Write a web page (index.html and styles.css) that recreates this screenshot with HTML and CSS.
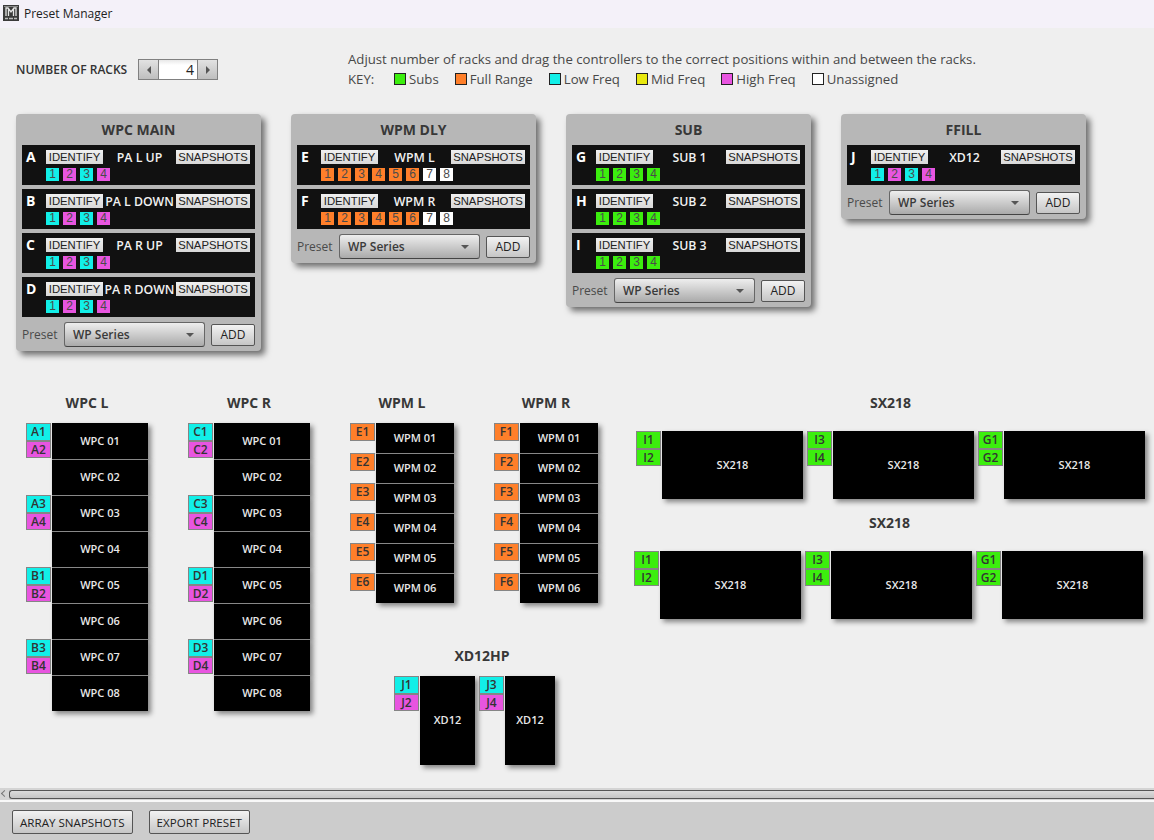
FILE: index.html
```html
<!DOCTYPE html>
<html>
  <head>
    <title>Preset Manager</title>
    <link rel="stylesheet" href="styles.css">
  </head>

  <body>
    <div class="titlebar">
      <svg class="app-icon" width="16" height="16" viewBox="0 0 16 16">
        <rect width="16" height="16" fill="#3a3a3a"/>
        <rect x="1" y="1" width="14" height="1" fill="#8a8a8a"/>
        <path d="M3 11V3h2l3 4 3-4h2v8M5.500 4v7M10.500 4v7" fill="none" stroke="#e4e4e4" stroke-width="1.300"/>
        <path d="M2 13.500h3M6 13.500h4M11 13.500h3" fill="none" stroke="#bbb" stroke-width="1.500"/>
      </svg>
      <span>Preset Manager</span>
    </div>

    <div class="main">
      <div class="top">
        <div class="racks-count">
          <span class="racks-label">NUMBER OF RACKS</span>
          <div class="spinner">
            <button class="spin-btn"><span class="tri-left"></span></button>
            <div class="spin-value">4</div>
            <button class="spin-btn"><span class="tri-right"></span></button>
          </div>
        </div>
        <div class="help">
          <div>Adjust number of racks and drag the controllers to the correct positions within and between the racks.</div>
          <div class="key">
            <span class="key-title">KEY:</span>
            <span class="key-item"><i class="swatch subs"></i>Subs</span>
            <span class="key-item"><i class="swatch full"></i>Full Range</span>
            <span class="key-item"><i class="swatch low"></i>Low Freq</span>
            <span class="key-item"><i class="swatch mid"></i>Mid Freq</span>
            <span class="key-item"><i class="swatch high"></i>High Freq</span>
            <span class="key-item"><i class="swatch none"></i>Unassigned</span>
          </div>
        </div>
      </div>

      <div class="racks">
        <div class="rack">
          <div class="rack-title">WPC MAIN</div>
          <div class="ctrl">
            <div class="ctrl-letter">A</div>
            <div class="ctrl-body">
              <div class="ctrl-top"><button class="mini identify">IDENTIFY</button><span class="ctrl-name">PA L UP</span><button class="mini snapshots">SNAPSHOTS</button></div>
              <div class="chips"><span class="chip low">1</span><span class="chip high">2</span><span class="chip low">3</span><span class="chip high">4</span></div>
            </div>
          </div>
          <div class="ctrl">
            <div class="ctrl-letter">B</div>
            <div class="ctrl-body">
              <div class="ctrl-top"><button class="mini identify">IDENTIFY</button><span class="ctrl-name">PA L DOWN</span><button class="mini snapshots">SNAPSHOTS</button></div>
              <div class="chips"><span class="chip low">1</span><span class="chip high">2</span><span class="chip low">3</span><span class="chip high">4</span></div>
            </div>
          </div>
          <div class="ctrl">
            <div class="ctrl-letter">C</div>
            <div class="ctrl-body">
              <div class="ctrl-top"><button class="mini identify">IDENTIFY</button><span class="ctrl-name">PA R UP</span><button class="mini snapshots">SNAPSHOTS</button></div>
              <div class="chips"><span class="chip low">1</span><span class="chip high">2</span><span class="chip low">3</span><span class="chip high">4</span></div>
            </div>
          </div>
          <div class="ctrl">
            <div class="ctrl-letter">D</div>
            <div class="ctrl-body">
              <div class="ctrl-top"><button class="mini identify">IDENTIFY</button><span class="ctrl-name">PA R DOWN</span><button class="mini snapshots">SNAPSHOTS</button></div>
              <div class="chips"><span class="chip low">1</span><span class="chip high">2</span><span class="chip low">3</span><span class="chip high">4</span></div>
            </div>
          </div>
          <div class="preset-row">
            <span class="preset-label">Preset</span>
            <div class="combo">WP Series<span class="combo-arrow"></span></div>
            <button class="btn add">ADD</button>
          </div>
        </div>

        <div class="rack">
          <div class="rack-title">WPM DLY</div>
          <div class="ctrl">
            <div class="ctrl-letter">E</div>
            <div class="ctrl-body">
              <div class="ctrl-top"><button class="mini identify">IDENTIFY</button><span class="ctrl-name">WPM L</span><button class="mini snapshots">SNAPSHOTS</button></div>
              <div class="chips"><span class="chip full">1</span><span class="chip full">2</span><span class="chip full">3</span><span class="chip full">4</span><span class="chip full">5</span><span class="chip full">6</span><span class="chip none">7</span><span class="chip none">8</span></div>
            </div>
          </div>
          <div class="ctrl">
            <div class="ctrl-letter">F</div>
            <div class="ctrl-body">
              <div class="ctrl-top"><button class="mini identify">IDENTIFY</button><span class="ctrl-name">WPM R</span><button class="mini snapshots">SNAPSHOTS</button></div>
              <div class="chips"><span class="chip full">1</span><span class="chip full">2</span><span class="chip full">3</span><span class="chip full">4</span><span class="chip full">5</span><span class="chip full">6</span><span class="chip none">7</span><span class="chip none">8</span></div>
            </div>
          </div>
          <div class="preset-row">
            <span class="preset-label">Preset</span>
            <div class="combo">WP Series<span class="combo-arrow"></span></div>
            <button class="btn add">ADD</button>
          </div>
        </div>

        <div class="rack">
          <div class="rack-title">SUB</div>
          <div class="ctrl">
            <div class="ctrl-letter">G</div>
            <div class="ctrl-body">
              <div class="ctrl-top"><button class="mini identify">IDENTIFY</button><span class="ctrl-name">SUB 1</span><button class="mini snapshots">SNAPSHOTS</button></div>
              <div class="chips"><span class="chip subs">1</span><span class="chip subs">2</span><span class="chip subs">3</span><span class="chip subs">4</span></div>
            </div>
          </div>
          <div class="ctrl">
            <div class="ctrl-letter">H</div>
            <div class="ctrl-body">
              <div class="ctrl-top"><button class="mini identify">IDENTIFY</button><span class="ctrl-name">SUB 2</span><button class="mini snapshots">SNAPSHOTS</button></div>
              <div class="chips"><span class="chip subs">1</span><span class="chip subs">2</span><span class="chip subs">3</span><span class="chip subs">4</span></div>
            </div>
          </div>
          <div class="ctrl">
            <div class="ctrl-letter">I</div>
            <div class="ctrl-body">
              <div class="ctrl-top"><button class="mini identify">IDENTIFY</button><span class="ctrl-name">SUB 3</span><button class="mini snapshots">SNAPSHOTS</button></div>
              <div class="chips"><span class="chip subs">1</span><span class="chip subs">2</span><span class="chip subs">3</span><span class="chip subs">4</span></div>
            </div>
          </div>
          <div class="preset-row">
            <span class="preset-label">Preset</span>
            <div class="combo">WP Series<span class="combo-arrow"></span></div>
            <button class="btn add">ADD</button>
          </div>
        </div>

        <div class="rack">
          <div class="rack-title">FFILL</div>
          <div class="ctrl">
            <div class="ctrl-letter">J</div>
            <div class="ctrl-body">
              <div class="ctrl-top"><button class="mini identify">IDENTIFY</button><span class="ctrl-name">XD12</span><button class="mini snapshots">SNAPSHOTS</button></div>
              <div class="chips"><span class="chip low">1</span><span class="chip high">2</span><span class="chip low">3</span><span class="chip high">4</span></div>
            </div>
          </div>
          <div class="preset-row">
            <span class="preset-label">Preset</span>
            <div class="combo">WP Series<span class="combo-arrow"></span></div>
            <button class="btn add">ADD</button>
          </div>
        </div>
      </div>

      <div class="arrays">
        <div class="array">
          <div class="array-title">WPC L</div>
          <div class="cab-row wpc"><div class="tags"><span class="tag low">A1</span><span class="tag high">A2</span></div><div class="cab">WPC 01</div></div>
          <div class="cab-row wpc"><div class="tags"></div><div class="cab">WPC 02</div></div>
          <div class="cab-row wpc"><div class="tags"><span class="tag low">A3</span><span class="tag high">A4</span></div><div class="cab">WPC 03</div></div>
          <div class="cab-row wpc"><div class="tags"></div><div class="cab">WPC 04</div></div>
          <div class="cab-row wpc"><div class="tags"><span class="tag low">B1</span><span class="tag high">B2</span></div><div class="cab">WPC 05</div></div>
          <div class="cab-row wpc"><div class="tags"></div><div class="cab">WPC 06</div></div>
          <div class="cab-row wpc"><div class="tags"><span class="tag low">B3</span><span class="tag high">B4</span></div><div class="cab">WPC 07</div></div>
          <div class="cab-row wpc"><div class="tags"></div><div class="cab">WPC 08</div></div>
        </div>

        <div class="array">
          <div class="array-title">WPC R</div>
          <div class="cab-row wpc"><div class="tags"><span class="tag low">C1</span><span class="tag high">C2</span></div><div class="cab">WPC 01</div></div>
          <div class="cab-row wpc"><div class="tags"></div><div class="cab">WPC 02</div></div>
          <div class="cab-row wpc"><div class="tags"><span class="tag low">C3</span><span class="tag high">C4</span></div><div class="cab">WPC 03</div></div>
          <div class="cab-row wpc"><div class="tags"></div><div class="cab">WPC 04</div></div>
          <div class="cab-row wpc"><div class="tags"><span class="tag low">D1</span><span class="tag high">D2</span></div><div class="cab">WPC 05</div></div>
          <div class="cab-row wpc"><div class="tags"></div><div class="cab">WPC 06</div></div>
          <div class="cab-row wpc"><div class="tags"><span class="tag low">D3</span><span class="tag high">D4</span></div><div class="cab">WPC 07</div></div>
          <div class="cab-row wpc"><div class="tags"></div><div class="cab">WPC 08</div></div>
        </div>

        <div class="array-col">
          <div class="array-pair">
            <div class="array">
              <div class="array-title">WPM L</div>
              <div class="cab-row wpm"><div class="tags"><span class="tag full">E1</span></div><div class="cab">WPM 01</div></div>
              <div class="cab-row wpm"><div class="tags"><span class="tag full">E2</span></div><div class="cab">WPM 02</div></div>
              <div class="cab-row wpm"><div class="tags"><span class="tag full">E3</span></div><div class="cab">WPM 03</div></div>
              <div class="cab-row wpm"><div class="tags"><span class="tag full">E4</span></div><div class="cab">WPM 04</div></div>
              <div class="cab-row wpm"><div class="tags"><span class="tag full">E5</span></div><div class="cab">WPM 05</div></div>
              <div class="cab-row wpm"><div class="tags"><span class="tag full">E6</span></div><div class="cab">WPM 06</div></div>
            </div>
            <div class="array">
              <div class="array-title">WPM R</div>
              <div class="cab-row wpm"><div class="tags"><span class="tag full">F1</span></div><div class="cab">WPM 01</div></div>
              <div class="cab-row wpm"><div class="tags"><span class="tag full">F2</span></div><div class="cab">WPM 02</div></div>
              <div class="cab-row wpm"><div class="tags"><span class="tag full">F3</span></div><div class="cab">WPM 03</div></div>
              <div class="cab-row wpm"><div class="tags"><span class="tag full">F4</span></div><div class="cab">WPM 04</div></div>
              <div class="cab-row wpm"><div class="tags"><span class="tag full">F5</span></div><div class="cab">WPM 05</div></div>
              <div class="cab-row wpm"><div class="tags"><span class="tag full">F6</span></div><div class="cab">WPM 06</div></div>
            </div>
          </div>
          <div class="xd-group">
            <div class="array-title xd-title">XD12HP</div>
            <div class="xd-row">
              <div class="cab-row xd"><div class="tags"><span class="tag low">J1</span><span class="tag high">J2</span></div><div class="cab">XD12</div></div>
              <div class="cab-row xd narrow"><div class="tags"><span class="tag low">J3</span><span class="tag high">J4</span></div><div class="cab">XD12</div></div>
            </div>
          </div>
        </div>

        <div class="sx-col">
          <div class="sx-group first">
            <div class="array-title">SX218</div>
            <div class="sx-row">
              <div class="cab-row sx"><div class="tags"><span class="tag subs">I1</span><span class="tag subs">I2</span></div><div class="cab">SX218</div></div>
              <div class="cab-row sx"><div class="tags"><span class="tag subs">I3</span><span class="tag subs">I4</span></div><div class="cab">SX218</div></div>
              <div class="cab-row sx"><div class="tags"><span class="tag subs">G1</span><span class="tag subs">G2</span></div><div class="cab">SX218</div></div>
            </div>
          </div>
          <div class="sx-group">
            <div class="array-title">SX218</div>
            <div class="sx-row">
              <div class="cab-row sx"><div class="tags"><span class="tag subs">I1</span><span class="tag subs">I2</span></div><div class="cab">SX218</div></div>
              <div class="cab-row sx"><div class="tags"><span class="tag subs">I3</span><span class="tag subs">I4</span></div><div class="cab">SX218</div></div>
              <div class="cab-row sx"><div class="tags"><span class="tag subs">G1</span><span class="tag subs">G2</span></div><div class="cab">SX218</div></div>
            </div>
          </div>
        </div>
      </div>
    </div>

    <div class="scrollbar">
      <span class="scroll-arrow"></span>
      <div class="scroll-thumb"></div>
    </div>

    <div class="footer">
      <button class="btn foot">ARRAY SNAPSHOTS</button>
      <button class="btn foot">EXPORT PRESET</button>
    </div>
  </body>
</html>
```

FILE: styles.css
```css
* {
  box-sizing: border-box;
}

html,
body {
  margin: 0;
  height: 840px;
  overflow: hidden;
}

body {
  display: flex;
  flex-direction: column;
  background-color: #efefef;
  font-family: "Open Sans", "Liberation Sans", sans-serif;
  color: #3c3c3c;
}

button {
  margin: 0;
  padding: 0;
  font-family: "Liberation Sans", sans-serif;
}

/* window title */
.titlebar {
  display: flex;
  align-items: center;
  flex: none;
  height: 28px;
  padding: 0 0 2px 3px;
  background-color: #f4f1f9;
  font-size: 12px;
  color: #222;
}

.app-icon {
  margin-right: 5px;
}

.main {
  flex: 1;
  min-height: 0;
}

/* number of racks and key */
.top {
  display: flex;
  height: 86px;
  padding-left: 16px;
}

.racks-count {
  display: flex;
  align-items: center;
  width: 332px;
  height: 21px;
  margin-top: 31px;
}

.racks-label {
  width: 122px;
  font-size: 12px;
  font-weight: 600;
  color: #333;
  white-space: nowrap;
}

.spinner {
  display: flex;
  width: 80px;
  height: 21px;
  border: 1px solid #808080;
  background-color: #fff;
}

.spin-btn {
  display: flex;
  align-items: center;
  justify-content: center;
  width: 19px;
  border: none;
  background: linear-gradient(#e2e2e2, #bebebe);
}

.spin-value {
  flex: 1;
  padding-right: 3px;
  border-left: 1px solid #808080;
  border-right: 1px solid #808080;
  background: linear-gradient(#e8e8e8, #fff 5px);
  text-align: right;
  font-size: 14px;
  line-height: 19px;
  color: #222;
}

.tri-left,
.tri-right {
  width: 0;
  height: 0;
  border-top: 4px solid transparent;
  border-bottom: 4px solid transparent;
}

.tri-left {
  border-right: 4px solid #555;
}

.tri-right {
  border-left: 4px solid #555;
}

.help {
  margin-top: 21px;
  font-size: 13.2px;
  line-height: 20px;
  color: #484848;
  white-space: nowrap;
}

.key {
  display: flex;
}

.key-title {
  width: 46px;
}

.key-item {
  display: flex;
  align-items: center;
  margin-right: 16px;
}

.swatch {
  width: 12px;
  height: 12px;
  margin-right: 3px;
  border: 1px solid #222;
}

.subs {
  background-color: #3cee0e;
}

.full {
  background-color: #ff7f2a;
}

.low {
  background-color: #12efe8;
}

.mid {
  background-color: #e8e80e;
}

.high {
  background-color: #e855e0;
}

.none {
  background-color: #fff;
}

/* rack panels */
.racks {
  display: flex;
  align-items: flex-start;
  gap: 30px;
  height: 279px;
  padding-left: 16px;
}

.rack {
  width: 245px;
  padding: 0 6px;
  border-radius: 4px;
  background-color: #b7b7b7;
  box-shadow: 4px 4px 6px rgba(0, 0, 0, 0.55);
}

.rack-title {
  height: 31px;
  text-align: center;
  font-size: 14px;
  font-weight: 700;
  line-height: 32px;
  color: #383838;
}

.ctrl {
  display: flex;
  height: 40px;
  margin-bottom: 4px;
  padding: 5px 5px 0 4px;
  background-color: #111;
}

.ctrl-letter {
  width: 20px;
  font-size: 14px;
  font-weight: 700;
  line-height: 14px;
  color: #fff;
}

.ctrl-body {
  flex: 1;
  min-width: 0;
}

.ctrl-top {
  display: flex;
  align-items: center;
  justify-content: space-between;
  height: 14px;
}

.ctrl-name {
  flex: 1;
  text-align: center;
  font-size: 12.3px;
  font-weight: 600;
  color: #f2f2f2;
  white-space: nowrap;
}

.mini {
  flex: none;
  height: 14px;
  border: none;
  background: linear-gradient(#f0f0f0, #d8d8d8);
  font-size: 11.3px;
  line-height: 14px;
  color: #222;
}

.identify {
  width: 57px;
}

.snapshots {
  width: 74px;
}

.chips {
  display: flex;
  gap: 4px;
  margin-top: 4px;
}

.chip {
  width: 13px;
  height: 13px;
  text-align: center;
  font-family: "Liberation Sans", sans-serif;
  font-size: 12px;
  line-height: 13px;
  color: #4a4a4a;
}

.preset-row {
  display: flex;
  align-items: center;
  height: 27px;
  margin-top: 2px;
  margin-bottom: 3px;
}

.preset-label {
  width: 42px;
  font-size: 12px;
  color: #4a4a4a;
}

.combo {
  display: flex;
  align-items: center;
  width: 141px;
  height: 25px;
  margin-right: 6px;
  padding: 0 10px 0 8px;
  border: 1px solid #666;
  border-bottom-color: #444;
  border-radius: 3px;
  background: linear-gradient(#eee, #aaa);
  font-size: 12px;
  font-weight: 600;
  color: #3a3a3a;
}

.combo-arrow {
  width: 0;
  height: 0;
  margin-left: auto;
  border-top: 4px solid #555;
  border-left: 4px solid transparent;
  border-right: 4px solid transparent;
}

.btn {
  border: 1px solid #555;
  border-radius: 2px;
  background: linear-gradient(#f2f2f2, #c6c6c6);
  font-family: "Open Sans", "Liberation Sans", sans-serif;
  font-size: 12px;
  color: #222;
}

.add {
  width: 44px;
  height: 22px;
}

/* speaker arrays */
.arrays {
  display: flex;
  align-items: flex-start;
  padding-left: 26px;
}

.array {
  flex: none;
}

.array + .array {
  margin-left: 40px;
}

.array-title {
  height: 20px;
  margin-bottom: 10px;
  text-align: center;
  font-size: 14px;
  font-weight: 700;
  line-height: 20px;
  color: #383838;
}

.cab-row {
  display: flex;
}

.tags {
  display: flex;
  flex: none;
  flex-direction: column;
  width: 25px;
  margin-right: 1px;
}

.tag {
  height: 17.5px;
  border: 1px solid #858585;
  text-align: center;
  font-size: 12px;
  font-weight: 600;
  line-height: 15px;
  color: #333;
}

.cab {
  display: flex;
  align-items: center;
  justify-content: center;
  padding-bottom: 2px;
  background-color: #000;
  box-shadow: 3px 3px 5px rgba(0, 0, 0, 0.45);
  font-size: 11px;
  font-weight: 600;
  color: #e8e8e8;
}

.wpc .cab {
  width: 96px;
  height: 36px;
}

.wpm .cab {
  width: 78px;
  height: 30px;
}

.wpc + .wpc .cab,
.wpm + .wpm .cab {
  border-top: 1px solid #888;
}

.array-col {
  width: 248px;
  margin-left: 40px;
}

.array-pair {
  display: flex;
}

.xd-group {
  margin-top: 43px;
  padding-left: 44px;
}

.xd-title {
  padding-right: 28px;
}

.xd-row {
  display: flex;
  gap: 4px;
}

.xd .cab {
  width: 55px;
  height: 89px;
}

.narrow .cab {
  width: 50px;
}

.sx-col {
  width: 511px;
  margin-left: 36px;
}

.sx-group {
  margin-bottom: 14px;
}

.sx-group.first {
  padding-left: 2px;
}

.sx-group .array-title {
  margin-bottom: 18px;
}

.sx-group + .sx-group .array-title {
  margin-bottom: 18px;
}

.sx-row {
  display: flex;
  gap: 4px;
}

.sx .cab {
  width: 141px;
  height: 68px;
}

/* bottom scrollbar and buttons */
.scrollbar {
  display: flex;
  flex: none;
  height: 14px;
  padding: 2px 0 3px 2px;
  border-bottom: 2px solid #f8f8f8;
  background-color: #d4d4d4;
}

.scroll-arrow {
  flex: none;
  width: 5px;
  height: 5px;
  margin: 1px 2px 0 0;
  border-left: 1px solid #777;
  border-bottom: 1px solid #777;
  transform: rotate(45deg);
}

.scroll-thumb {
  flex: 1;
  height: 9px;
  border: 1px solid #555;
  border-right: none;
  border-radius: 3px 0 0 3px;
  background: linear-gradient(#dcdcdc, #c4c4c4);
}

.footer {
  display: flex;
  flex: none;
  align-items: flex-start;
  gap: 16px;
  height: 38px;
  padding: 8px 0 0 12px;
  background-color: #cccccc;
}

.foot {
  height: 24px;
  padding: 0 7px;
  font-size: 11.6px;
  white-space: nowrap;
}
```
